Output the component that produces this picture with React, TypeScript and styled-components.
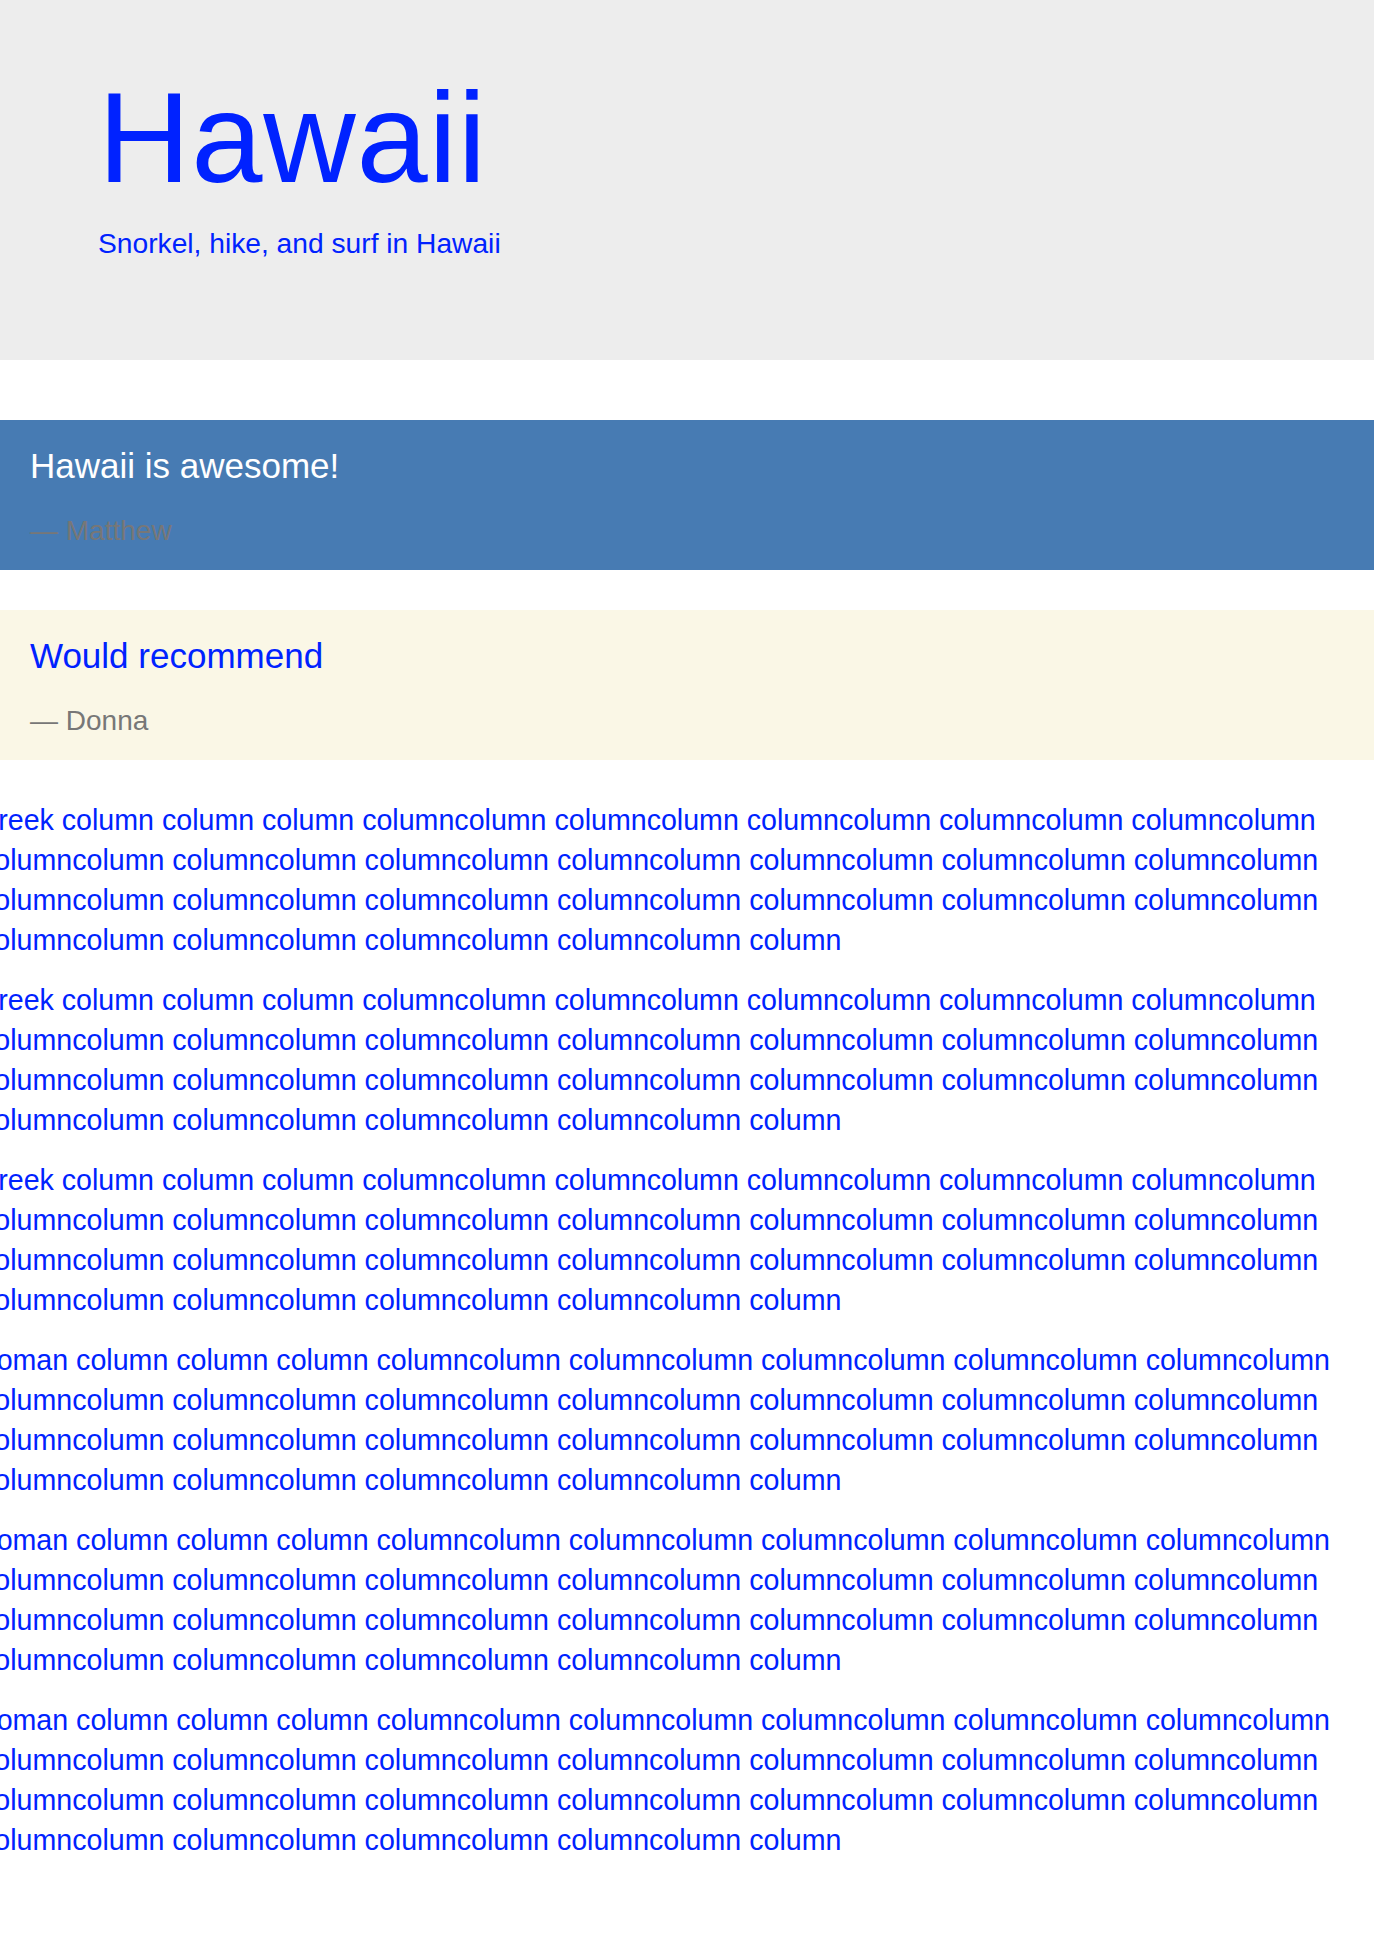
import React from "react";
import styled, { createGlobalStyle } from "styled-components";

const GlobalStyle = createGlobalStyle`
  html, body {
    margin: 0;
    padding: 0;
    background: #ffffff;
  }
  body {
    font-family: "Liberation Sans", Arial, Helvetica, sans-serif;
    color: #0022ff;
    overflow-x: hidden;
  }
`;

const Page = styled.div`
  display: flex;
  flex-direction: column;
`;

const Header = styled.header`
  background: #ededed;
  padding: 74px 98px 101px;
`;

const Title = styled.h1`
  margin: 0 0 25px;
  font-size: 128px;
  line-height: 128px;
  letter-spacing: 0.8px;
  font-weight: 400;
  color: #0022ff;
`;

const Subtitle = styled.p`
  margin: 0;
  font-size: 28.2px;
  line-height: 32px;
  color: #0022ff;
`;

const Testimonials = styled.section`
  display: flex;
  flex-direction: column;
  gap: 40px;
  margin-top: 60px;
`;

const Quote = styled.blockquote<{ $bg: string }>`
  margin: 0;
  background: ${(p) => p.$bg};
  padding: 26px 30px 23px;
  display: flex;
  flex-direction: column;
  gap: 29px;
`;

const QuoteText = styled.p<{ $color: string }>`
  margin: 0;
  font-size: 35px;
  line-height: 40px;
  color: ${(p) => p.$color};
`;

const Author = styled.cite`
  font-style: normal;
  font-size: 28px;
  line-height: 32px;
  color: #777777;
`;

const Columns = styled.section`
  margin: 40px 0 0 -20px;
`;

const Para = styled.p`
  margin: 0 0 20px;
  font-size: 28.6px;
  line-height: 40px;
  text-indent: -4px;
  color: #0022ff;
`;

const filler = (lead: string) =>
  `${lead} column column column ` +
  Array(23).fill("columncolumn").join(" ") +
  " column";

const paragraphs = [
  filler("Greek"),
  filler("Greek"),
  filler("Greek"),
  filler("Roman"),
  filler("Roman"),
  filler("Roman"),
];

const quotes = [
  { text: "Hawaii is awesome!", author: "Matthew", bg: "#477bb3", color: "#ffffff" },
  { text: "Would recommend", author: "Donna", bg: "#faf7e6", color: "#0022ff" },
];

export default function App() {
  return (
    <>
      <GlobalStyle />
      <Page>
        <Header>
          <Title>Hawaii</Title>
          <Subtitle>Snorkel, hike, and surf in Hawaii</Subtitle>
        </Header>
        <Testimonials>
          {quotes.map((q) => (
            <Quote key={q.author} $bg={q.bg}>
              <QuoteText $color={q.color}>{q.text}</QuoteText>
              <Author>— {q.author}</Author>
            </Quote>
          ))}
        </Testimonials>
        <Columns>
          {paragraphs.map((t, i) => (
            <Para key={i}>{t}</Para>
          ))}
        </Columns>
      </Page>
    </>
  );
}
